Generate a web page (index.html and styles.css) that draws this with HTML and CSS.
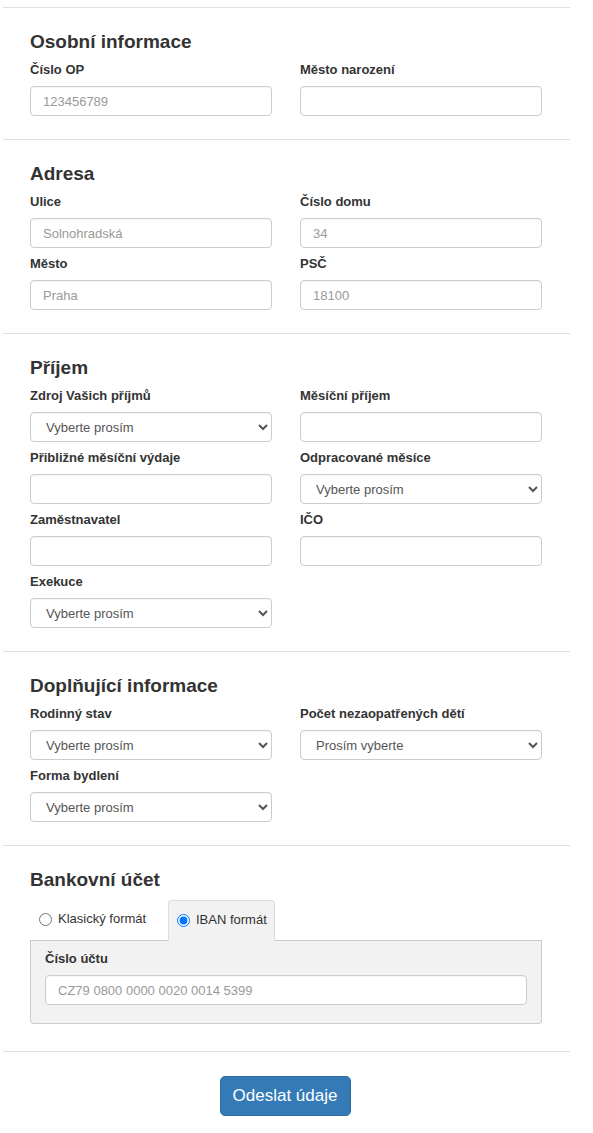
FILE: index.html
```html
<!DOCTYPE html>
<html lang="cs">
<head>
<meta charset="utf-8">
<title>Formulář</title>
<link rel="stylesheet" href="styles.css">
</head>
<body>
<div class="page">
  <hr class="sep">
  <section class="sec">
    <h3>Osobní informace</h3>
    <div class="grid">
      <div class="field"><label>Číslo OP</label><input type="text" placeholder="123456789"></div>
      <div class="field"><label>Město narození</label><input type="text"></div>
    </div>
  </section>
  <hr class="sep">
  <section class="sec">
    <h3>Adresa</h3>
    <div class="grid">
      <div class="field"><label>Ulice</label><input type="text" placeholder="Solnohradská"></div>
      <div class="field"><label>Číslo domu</label><input type="text" placeholder="34"></div>
      <div class="field"><label>Město</label><input type="text" placeholder="Praha"></div>
      <div class="field"><label>PSČ</label><input type="text" placeholder="18100"></div>
    </div>
  </section>
  <hr class="sep">
  <section class="sec">
    <h3>Příjem</h3>
    <div class="grid">
      <div class="field"><label>Zdroj Vašich příjmů</label><select><option>Vyberte prosím</option></select></div>
      <div class="field"><label>Měsíční příjem</label><input type="text"></div>
      <div class="field"><label>Přibližné měsíční výdaje</label><input type="text"></div>
      <div class="field"><label>Odpracované měsíce</label><select><option>Vyberte prosím</option></select></div>
      <div class="field"><label>Zaměstnavatel</label><input type="text"></div>
      <div class="field"><label>IČO</label><input type="text"></div>
      <div class="field"><label>Exekuce</label><select><option>Vyberte prosím</option></select></div>
    </div>
  </section>
  <hr class="sep">
  <section class="sec">
    <h3>Doplňující informace</h3>
    <div class="grid">
      <div class="field"><label>Rodinný stav</label><select><option>Vyberte prosím</option></select></div>
      <div class="field"><label>Počet nezaopatřených dětí</label><select><option>Prosím vyberte</option></select></div>
      <div class="field"><label>Forma bydlení</label><select><option>Vyberte prosím</option></select></div>
    </div>
  </section>
  <hr class="sep">
  <section class="sec bank">
    <h3>Bankovní účet</h3>
    <div class="tabs">
      <label class="tab"><input type="radio" name="fmt"> Klasický formát</label>
      <label class="tab active"><input type="radio" name="fmt" checked> IBAN formát</label>
      <div class="tab-fill"></div>
    </div>
    <div class="panel">
      <div class="field"><label>Číslo účtu</label><input type="text" placeholder="CZ79 0800 0000 0020 0014 5399"></div>
    </div>
  </section>
  <hr class="sep">
  <div class="actions">
    <button type="button" class="btn">Odeslat údaje</button>
  </div>
</div>
</body>
</html>
```

FILE: styles.css
```css
* { box-sizing: border-box; }
html, body { margin: 0; padding: 0; background: #fff; }
body {
  font-family: "Liberation Sans", Arial, sans-serif;
  color: #333;
  font-size: 13px;
}
.page { width: 567px; margin-left: 3px; }
.sep { margin: 7px 0 0; border: 0; border-top: 1px solid #e0e0e0; height: 0; }
.sec { padding: 23px 28px 15px 27px; }
.sec + .sep { margin-top: 0; }
h3 {
  margin: 0 0 9px;
  font-size: 19px;
  line-height: 22px;
  font-weight: bold;
  color: #333;
}
.grid {
  display: grid;
  grid-template-columns: 242px 242px;
  column-gap: 28px;
}
.field { display: flex; flex-direction: column; margin-bottom: 8px; }
.field > label {
  font-weight: bold;
  font-size: 13px;
  line-height: 16px;
  margin-bottom: 8px;
  color: #333;
}
input[type=text], select {
  height: 30px;
  width: 100%;
  border: 1px solid #ccc;
  border-radius: 4px;
  font-family: "Liberation Sans", Arial, sans-serif;
  font-size: 13px;
  color: #555;
  background: #fff;
  padding: 0 12px;
  margin: 0;
  box-shadow: inset 0 1px 1px rgba(0,0,0,0.04);
}
select { padding: 0 8px 0 11px; }
input::placeholder { color: #999; }
.bank { padding-bottom: 13px; }
.tabs { display: flex; width: 512px; height: 41px; margin-top: 4px; }
.tab {
  display: flex;
  align-items: center;
  gap: 6px;
  white-space: nowrap;
  flex-shrink: 0;
  font-size: 13px;
  color: #333;
  font-weight: normal;
  padding: 0 10px 4px 9px;
  border-bottom: 1px solid #ccc;
  margin: 0;
}
.tab:first-child { width: 138px; }
.tab.active {
  width: 107px;
  background: #f2f2f2;
  border: 1px solid #ddd;
  border-bottom: 0;
  border-radius: 4px 4px 0 0;
  padding-left: 8px;
  padding-top: 1px;
}
.tab input { margin: 2px 0 0 0; width: 13px; height: 13px; flex-shrink: 0; }
.tab-fill { flex: 1; border-bottom: 1px solid #ccc; }
.panel {
  width: 512px;
  background: #f2f2f2;
  border: 1px solid #ccc;
  border-top: 0;
  border-radius: 0 0 4px 4px;
  padding: 10px 14px 10px 14px;
  margin-bottom: 14px;
}
.panel .field { margin-bottom: 8px; }
.actions { display: flex; justify-content: center; padding: 24px 0 17px; margin-left: -3px; }
.btn {
  width: 131px;
  height: 40px;
  background: #337ab7;
  border: 1px solid #2e6da4;
  border-radius: 5px;
  color: #fff;
  font-family: "Liberation Sans", Arial, sans-serif;
  font-size: 17px;
  padding: 0;
}
```
